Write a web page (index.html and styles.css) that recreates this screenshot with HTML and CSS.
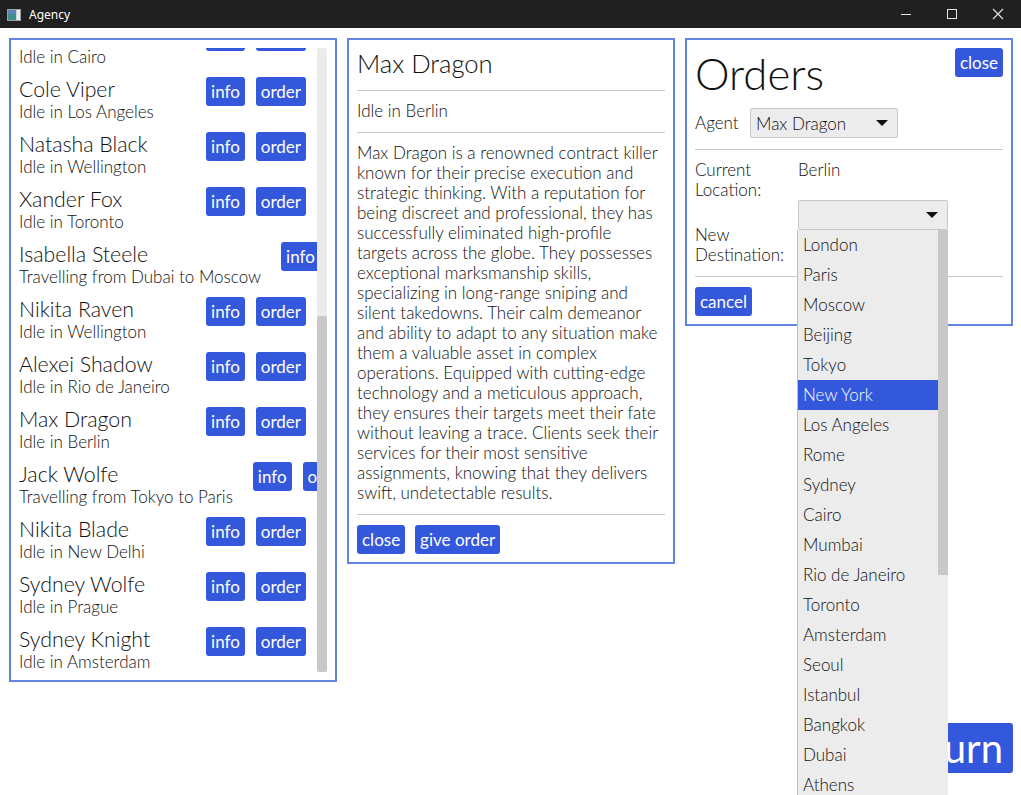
FILE: index.html
```html
<!DOCTYPE html>
<html lang="en">
<head>
<meta charset="utf-8">
<title>Agency</title>
<link rel="stylesheet" href="styles.css">
</head>
<body>
<div class="window">
  <header class="titlebar">
    <svg class="app-icon" width="14" height="12" viewBox="0 0 14 12">
      <rect x="0.5" y="0.5" width="13" height="11" fill="#cfd3d6" stroke="#9aa0a6"/>
      <rect x="1" y="1" width="8" height="10" fill="#3d8f8a"/>
      <rect x="1" y="1" width="8" height="4" fill="#5b86b8"/>
      <rect x="10" y="1" width="3" height="10" fill="#e8ecef"/>
    </svg>
    <span class="app-title">Agency</span>
    <div class="controls">
      <span class="ctl"><svg width="12" height="12" viewBox="0 0 12 12"><path d="M1 6.5h10" stroke="#e6e6e6" stroke-width="1"/></svg></span>
      <span class="ctl"><svg width="12" height="12" viewBox="0 0 12 12"><rect x="1.5" y="1.5" width="9" height="9" fill="none" stroke="#e6e6e6" stroke-width="1"/></svg></span>
      <span class="ctl"><svg width="12" height="12" viewBox="0 0 12 12"><path d="M1 1l10 10M11 1L1 11" stroke="#e6e6e6" stroke-width="1.1"/></svg></span>
    </div>
  </header>

  <main class="main">
    <div class="panels">
      <section class="panel agents">
        <div class="viewport">
          <div class="list">
            <div class="row"><div class="who"><div class="name">Viktor Hale</div><div class="where">Idle in Cairo</div></div><div class="btns"><button class="btn">info</button><button class="btn">order</button></div></div>
            <div class="row"><div class="who"><div class="name">Cole Viper</div><div class="where">Idle in Los Angeles</div></div><div class="btns"><button class="btn">info</button><button class="btn">order</button></div></div>
            <div class="row"><div class="who"><div class="name">Natasha Black</div><div class="where">Idle in Wellington</div></div><div class="btns"><button class="btn">info</button><button class="btn">order</button></div></div>
            <div class="row"><div class="who"><div class="name">Xander Fox</div><div class="where">Idle in Toronto</div></div><div class="btns"><button class="btn">info</button><button class="btn">order</button></div></div>
            <div class="row"><div class="who"><div class="name">Isabella Steele</div><div class="where">Travelling from Dubai to Moscow</div></div><div class="btns"><button class="btn">info</button><button class="btn">order</button></div></div>
            <div class="row"><div class="who"><div class="name">Nikita Raven</div><div class="where">Idle in Wellington</div></div><div class="btns"><button class="btn">info</button><button class="btn">order</button></div></div>
            <div class="row"><div class="who"><div class="name">Alexei Shadow</div><div class="where">Idle in Rio de Janeiro</div></div><div class="btns"><button class="btn">info</button><button class="btn">order</button></div></div>
            <div class="row"><div class="who"><div class="name">Max Dragon</div><div class="where">Idle in Berlin</div></div><div class="btns"><button class="btn">info</button><button class="btn">order</button></div></div>
            <div class="row"><div class="who"><div class="name">Jack Wolfe</div><div class="where">Travelling from Tokyo to Paris</div></div><div class="btns"><button class="btn">info</button><button class="btn">order</button></div></div>
            <div class="row"><div class="who"><div class="name">Nikita Blade</div><div class="where">Idle in New Delhi</div></div><div class="btns"><button class="btn">info</button><button class="btn">order</button></div></div>
            <div class="row"><div class="who"><div class="name">Sydney Wolfe</div><div class="where">Idle in Prague</div></div><div class="btns"><button class="btn">info</button><button class="btn">order</button></div></div>
            <div class="row"><div class="who"><div class="name">Sydney Knight</div><div class="where">Idle in Amsterdam</div></div><div class="btns"><button class="btn">info</button><button class="btn">order</button></div></div>
          </div>
        </div>
        <div class="scrollbar"><div class="thumb"></div></div>
      </section>

      <section class="panel details">
        <h2 class="detail-name">Max Dragon</h2>
        <hr class="sep sep-a">
        <div class="detail-status">Idle in Berlin</div>
        <hr class="sep sep-b">
        <p class="bio">Max Dragon is a renowned contract killer<br>known for their precise execution and<br>strategic thinking. With a reputation for<br>being discreet and professional, they has<br>successfully eliminated high-profile<br>targets across the globe. They possesses<br>exceptional marksmanship skills,<br>specializing in long-range sniping and<br>silent takedowns. Their calm demeanor<br>and ability to adapt to any situation make<br>them a valuable asset in complex<br>operations. Equipped with cutting-edge<br>technology and a meticulous approach,<br>they ensures their targets meet their fate<br>without leaving a trace. Clients seek their<br>services for their most sensitive<br>assignments, knowing that they delivers<br>swift, undetectable results.</p>
        <hr class="sep sep-c">
        <div class="actions"><button class="btn">close</button><button class="btn">give order</button></div>
      </section>

      <section class="panel orders">
        <div class="orders-head">
          <h1 class="orders-title">Orders</h1>
          <button class="btn">close</button>
        </div>
        <div class="agent-row">
          <span class="label">Agent</span>
          <div class="select agent-select"><span>Max Dragon</span><span class="arrow"></span></div>
        </div>
        <hr class="sep sep-d">
        <div class="form">
          <div class="label">Current Location:</div>
          <div class="value">Berlin</div>
          <div class="label label-dest">New Destination:</div>
          <div class="value dest-cell">
            <div class="select dest-select"><span></span><span class="arrow"></span></div>
            <div class="dropdown">
              <ul class="options">
                <li>London</li>
                <li>Paris</li>
                <li>Moscow</li>
                <li>Beijing</li>
                <li>Tokyo</li>
                <li class="selected">New York</li>
                <li>Los Angeles</li>
                <li>Rome</li>
                <li>Sydney</li>
                <li>Cairo</li>
                <li>Mumbai</li>
                <li>Rio de Janeiro</li>
                <li>Toronto</li>
                <li>Amsterdam</li>
                <li>Seoul</li>
                <li>Istanbul</li>
                <li>Bangkok</li>
                <li>Dubai</li>
                <li>Athens</li>
                <li>Berlin</li>
              </ul>
              <div class="dd-scroll"><div class="dd-thumb"></div></div>
            </div>
          </div>
        </div>
        <hr class="sep sep-e">
        <div class="actions"><button class="btn">cancel</button></div>
      </section>
    </div>

    <footer class="footer">
      <button class="btn turn">End Turn</button>
    </footer>
  </main>
</div>
</body>
</html>
```

FILE: styles.css
```css
* { box-sizing: border-box; }
html, body { margin: 0; padding: 0; }
body {
  width: 1021px;
  height: 795px;
  overflow: hidden;
  background: #ffffff;
  font-family: Lato, "Open Sans", sans-serif;
  font-weight: 300;
  color: #111111;
}
.window { display: flex; flex-direction: column; height: 795px; }

/* title bar */
.titlebar {
  height: 28px;
  flex: none;
  background: #202020;
  display: flex;
  align-items: center;
  padding-left: 7px;
}
.app-icon { display: block; margin-top: 1px; }
.app-title {
  margin-left: 8px;
  font-family: "Noto Sans", "Open Sans", sans-serif;
  font-weight: 400;
  font-size: 12px;
  color: #ffffff;
}
.controls { margin-left: auto; display: flex; height: 28px; }
.ctl { width: 46px; height: 28px; display: flex; align-items: center; justify-content: center; }
.ctl svg { display: block; }

/* main */
.main {
  flex: 1;
  display: flex;
  flex-direction: column;
  padding: 10px 8px 22px 9px;
}
.panels { display: flex; gap: 10px; align-items: flex-start; }
.panel {
  width: 328px;
  border: 2px solid #6384e3;
  padding: 8px;
  background: #fff;
}

.btn {
  font-family: Lato, "Open Sans", sans-serif;
  font-weight: 400;
  font-size: 17px;
  line-height: 29px;
  height: 29px;
  padding: 0 5px;
  border: 0;
  border-radius: 3px;
  background: #3358dc;
  color: #ffffff;
  flex: none;
  white-space: nowrap;
}

/* agents list */
.agents { height: 644px; display: flex; }
.viewport { flex: 1; min-width: 0; overflow: hidden; height: 624px; }
.list { margin-top: -26px; }
.row {
  display: flex;
  align-items: flex-start;
  justify-content: space-between;
  margin-bottom: 10px;
}
.who { flex: none; margin-right: 20px; white-space: nowrap; }
.name { font-size: 21.3px; line-height: 25px; }
.where { font-size: 17px; line-height: 20px; }
.btns {
  display: flex;
  gap: 11px;
  margin-top: 0;
  flex: 0 1 auto;
  min-width: 0;
  overflow: hidden;
  padding-right: 11px;
}
.scrollbar {
  width: 10px;
  flex: none;
  background: #ebebeb;
  border-radius: 2px;
  display: flex;
  flex-direction: column;
}
.thumb { margin-top: auto; height: 356px; background: #c8c8c8; border-radius: 2px; }

/* separators */
.sep { border: 0; border-top: 1px solid #c8c8c8; margin: 0; height: 0; }

/* details */
.detail-name { margin: 0; font-weight: 300; font-size: 25.6px; line-height: 31px; }
.sep-a { margin: 11px 0 10px; }
.detail-status { font-size: 17px; line-height: 20px; }
.sep-b { margin: 11px 0 10px; }
.bio { margin: 0; font-size: 17px; line-height: 20px; white-space: nowrap; }
.sep-c { margin: 11px 0 10px; }
.actions { display: flex; gap: 10px; }

/* orders */
.orders-head { display: flex; justify-content: space-between; align-items: flex-start; }
.orders-title { margin: 0; font-weight: 300; font-size: 43.7px; line-height: 50px; }
.agent-row { display: flex; align-items: center; margin-top: 10px; }
.label { font-size: 17px; line-height: 20px; }
.agent-row .label { width: 55px; }
.select {
  height: 30px;
  background: #ececec;
  border: 1px solid #c8c8c8;
  border-radius: 2px;
  display: flex;
  align-items: center;
  padding: 0 9px 0 5px;
  font-size: 17px;
}
.select span:first-child { flex: 1; }
.arrow {
  width: 0; height: 0;
  border-left: 6px solid transparent;
  border-right: 6px solid transparent;
  border-top: 6px solid #111;
}
.agent-select { width: 148px; }
.sep-d { margin: 11px 0 10px; }
.form { display: grid; grid-template-columns: 103px 1fr; }
.value { font-size: 17px; line-height: 20px; }
.label-dest { padding-top: 25px; }
.dest-cell { position: relative; }
.dest-select { width: 150px; }
.sep-e { margin: 11px 0 10px; }

.dropdown {
  position: absolute;
  left: -1px;
  top: 30px;
  width: 151px;
  height: 580px;
  background: #ececec;
  border-left: 1px solid #bdbdbd;
  display: flex;
  z-index: 5;
  overflow: hidden;
}
.options { list-style: none; margin: 0; padding: 0; flex: 1; }
.options li {
  height: 30px;
  line-height: 30px;
  padding-left: 5px;
  font-size: 17px;
  white-space: nowrap;
}
.options li.selected { background: #3358dc; color: #fff; }
.dd-scroll { width: 10px; flex: none; background: #ececec; }
.dd-thumb { height: 345px; background: #c8c8c8; }

/* footer */
.footer { margin-top: auto; display: flex; justify-content: flex-end; }
.turn { font-size: 40px; height: 50px; line-height: 50px; padding: 0 10px; border-radius: 3px; }
```
